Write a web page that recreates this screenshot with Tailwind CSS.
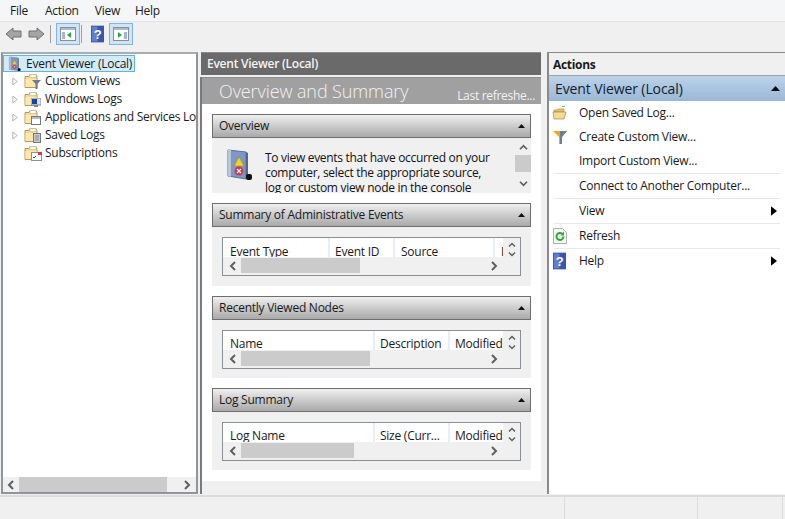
<!DOCTYPE html>
<html lang="en">
<head>
  <meta charset="UTF-8">
  <title>Event Viewer</title>
  <script src="https://cdn.jsdelivr.net/npm/@tailwindcss/browser@4"></script>
</head>
<body class="bg-[#f0f0f0] text-[#1a1a1a] overflow-hidden">
  <!-- shared icons -->
  <svg class="absolute w-0 h-0">
    <defs>
      <symbol id="folder" viewBox="0 0 16 16">
        <path d="M1 3.5h4l1-2h6l1 2v11H1z" fill="#f6dd8e" stroke="#b8995a" stroke-width="1"/>
        <path d="M6 1.5h6v3H6z" fill="#fff" stroke="#c4b58a" stroke-width=".6"/>
        <path d="M1.5 6h11v8h-11z" fill="#fbe9ac"/>
      </symbol>
      <symbol id="left" viewBox="0 0 8 10"><path d="M6 1 2 5l4 4" fill="none" stroke="#5f5f5f" stroke-width="2"/></symbol>
      <symbol id="right" viewBox="0 0 8 10"><path d="M2 1l4 4-4 4" fill="none" stroke="#5f5f5f" stroke-width="2"/></symbol>
      <symbol id="up" viewBox="0 0 10 8"><path d="M1 6l4-4 4 4" fill="none" stroke="#5f5f5f" stroke-width="2"/></symbol>
      <symbol id="down" viewBox="0 0 10 8"><path d="M1 2l4 4 4-4" fill="none" stroke="#5f5f5f" stroke-width="2"/></symbol>
      <symbol id="expand" viewBox="0 0 7 10"><path d="M1 1l5 4-5 4z" fill="#fff" stroke="#a6a6a6"/></symbol>
      <symbol id="help" viewBox="0 0 14 18">
        <rect width="14" height="18" fill="#3a55b0"/><rect x="1" y="1" width="6" height="16" fill="#5f7fd0"/>
        <text x="7" y="14" text-anchor="middle" font-family="Liberation Sans" font-weight="700" font-size="14" fill="#fff">?</text>
      </symbol>
      <symbol id="log" viewBox="0 0 28 34">
        <path d="M3 2l18 2v27L3 28z" fill="#7d98c4" stroke="#5a6f94"/>
        <path d="M3 2l3 0v27l-3-1z" fill="#b9c6da"/>
        <path d="M21 4l2 1v26h-2z" fill="#51688f"/>
        <path d="M14 9l5 9H9z" fill="#f4cf30" stroke="#a8891a" stroke-width=".6"/>
        <circle cx="14" cy="23" r="4.5" fill="#cc3a48"/>
        <path d="M12 21l4 4m0-4l-4 4" stroke="#fff" stroke-width="1.2"/>
        <rect x="21" y="26" width="6" height="6" rx="2" fill="#111"/>
      </symbol>
    </defs>
  </svg>

  <div class="w-[785px] h-[519px] flex flex-col font-['Open_Sans','Liberation_Sans',sans-serif] text-[12px] tracking-[-0.25px]">
    <!-- menu bar -->
    <div class="h-[22px] shrink-0 bg-[#f5f6f7] border-b border-[#e4e4e4] flex items-center text-[12px]">
      <span class="ml-[10px]">File</span>
      <span class="ml-[17px]">Action</span>
      <span class="ml-[16px]">View</span>
      <span class="ml-[15px]">Help</span>
    </div>

    <!-- toolbar -->
    <div class="h-[24px] shrink-0 flex items-center bg-[#f0f0f0] pl-[5px]">
      <svg class="w-[17px] h-[14px]" viewBox="0 0 17 14"><path d="M1 7l7-6v3h8v6H8v3z" fill="#a4a4a4" stroke="#707070"/></svg>
      <svg class="w-[17px] h-[14px] ml-[6px]" viewBox="0 0 17 14"><path d="M16 7L9 1v3H1v6h8v3z" fill="#a4a4a4" stroke="#707070"/></svg>
      <div class="w-px h-[18px] bg-[#a0a0a0] ml-[5px]"></div>
      <div class="w-[24px] h-[22px] ml-[5px] bg-[#cfe4f7] border border-[#7fb5ea] flex items-center justify-center">
        <svg class="w-[16px] h-[14px]" viewBox="0 0 16 14"><rect x=".5" y=".5" width="15" height="13" fill="#fff" stroke="#8a8f95"/><rect x="1" y="1" width="14" height="2" fill="#a8bcd4"/><rect x="2" y="5" width="3" height="7" fill="#9fb7d0"/><path d="M11 5v6L7 8z" fill="#2fa83a"/></svg>
      </div>
      <div class="w-px h-[18px] bg-[#a0a0a0] ml-[1px]"></div>
      <svg class="w-[13px] h-[18px] ml-[9px]"><use href="#help"/></svg>
      <div class="w-[24px] h-[22px] ml-[5px] bg-[#cfe4f7] border border-[#7fb5ea] flex items-center justify-center">
        <svg class="w-[16px] h-[14px]" viewBox="0 0 16 14"><rect x=".5" y=".5" width="15" height="13" fill="#fff" stroke="#8a8f95"/><rect x="1" y="1" width="14" height="2" fill="#a8bcd4"/><rect x="11" y="5" width="3" height="7" fill="#9fb7d0"/><path d="M5 5v6l4-3z" fill="#2fa83a"/></svg>
      </div>
    </div>

    <!-- panes -->
    <div class="flex-1 min-h-0 flex pt-[6px]">
      <!-- tree -->
      <div class="w-[197px] ml-px shrink-0 bg-white border-2 border-[#8f959b] border-t-[#a8adb3] flex flex-col">
        <div class="flex-1 min-h-0 overflow-hidden pt-px whitespace-nowrap">
          <div class="h-[17px] w-[132px] flex items-center bg-[#d3ebf9] border border-[#62b4dd]">
            <svg class="w-[17px] h-[16px] ml-[2px] shrink-0" viewBox="0 0 28 34"><use href="#log"/></svg>
            <span class="ml-[3px]">Event Viewer (Local)</span>
          </div>
          <div class="h-[18px] flex items-center pl-[9px]">
            <svg class="w-[6px] h-[9px] shrink-0"><use href="#expand"/></svg>
            <span class="relative ml-[6px] w-[16px] h-[16px] shrink-0">
              <svg class="w-[16px] h-[16px]"><use href="#folder"/></svg>
              <svg class="absolute right-[-1px] bottom-0 w-[9px] h-[9px]" viewBox="0 0 9 9"><path d="M0 0h9L5.500 4v5h-2V4z" fill="#6f7f8f"/></svg>
            </span>
            <span class="ml-[5px]">Custom Views</span>
          </div>
          <div class="h-[18px] flex items-center pl-[9px]">
            <svg class="w-[6px] h-[9px] shrink-0"><use href="#expand"/></svg>
            <span class="relative ml-[6px] w-[16px] h-[16px] shrink-0">
              <svg class="w-[16px] h-[16px]"><use href="#folder"/></svg>
              <svg class="absolute right-[-1px] bottom-0 w-[10px] h-[9px]" viewBox="0 0 10 9"><rect width="10" height="7" fill="#dfe6ef" stroke="#7d8894"/><rect x="1" y="1" width="5" height="5" fill="#1a3fb0"/><rect x="3" y="7" width="4" height="2" fill="#7d8894"/></svg>
            </span>
            <span class="ml-[5px]">Windows Logs</span>
          </div>
          <div class="h-[18px] flex items-center pl-[9px]">
            <svg class="w-[6px] h-[9px] shrink-0"><use href="#expand"/></svg>
            <span class="relative ml-[6px] w-[16px] h-[16px] shrink-0">
              <svg class="w-[16px] h-[16px]"><use href="#folder"/></svg>
              <svg class="absolute right-[-1px] bottom-0 w-[10px] h-[9px]" viewBox="0 0 10 9"><rect x=".5" y=".5" width="9" height="8" fill="#fff" stroke="#6f7780"/><rect x="1" y="1" width="8" height="2" fill="#b5bfca"/></svg>
            </span>
            <span class="ml-[5px]">Applications and Services Lo</span>
          </div>
          <div class="h-[18px] flex items-center pl-[9px]">
            <svg class="w-[6px] h-[9px] shrink-0"><use href="#expand"/></svg>
            <span class="relative ml-[6px] w-[16px] h-[16px] shrink-0">
              <svg class="w-[16px] h-[16px]"><use href="#folder"/></svg>
              <svg class="absolute right-[-1px] bottom-0 w-[8px] h-[10px]" viewBox="0 0 8 10"><rect x=".5" y=".5" width="7" height="9" fill="#c8ccd2" stroke="#70767e"/><path d="M2 3h4M2 5h4M2 7h4" stroke="#70767e" stroke-width=".7"/></svg>
            </span>
            <span class="ml-[5px]">Saved Logs</span>
          </div>
          <div class="h-[18px] flex items-center pl-[21px]">
            <span class="relative w-[16px] h-[16px] shrink-0">
              <svg class="w-[16px] h-[16px]"><use href="#folder"/></svg>
              <svg class="absolute right-[-2px] bottom-0 w-[11px] h-[9px]" viewBox="0 0 11 9"><rect x=".5" y=".5" width="10" height="8" fill="#fff" stroke="#8a9098"/><rect x="7" y="0" width="4" height="3" fill="#d83a4a"/><path d="M2 5l1 1 2-2" stroke="#3a68c0" fill="none"/></svg>
            </span>
            <span class="ml-[5px]">Subscriptions</span>
          </div>
        </div>
        <div class="h-[15px] shrink-0 bg-[#f0f0f0] flex items-center pl-[4px]">
          <svg class="w-[8px] h-[10px]"><use href="#left"/></svg>
          <div class="h-[15px] w-[148px] ml-[4px] bg-[#cbcbcb]"></div>
          <svg class="w-[8px] h-[10px] ml-[16px]"><use href="#right"/></svg>
        </div>
      </div>

      <!-- centre -->
      <div class="w-[341px] ml-[2px] shrink-0 flex flex-col">
        <div class="h-[23px] shrink-0 ml-px bg-[#6a6a6a] border-t border-[#8c8c8c] flex items-center pl-[6px] font-semibold text-[#f4f4f4]">Event Viewer (Local)</div>
        <div class="flex-1 min-h-0 mt-[2px] border-l-2 border-[#7a7a7a] flex flex-col bg-[#f0f0f0]">
          <div class="h-[27px] shrink-0 bg-[#a0a0a0] border-t border-[#8c8c8c] flex justify-between items-end pl-[17px] pr-[6px] text-[#f2f2f2] whitespace-nowrap">
            <span class="text-[18px] leading-[26px] font-light tracking-[-0.1px]">Overview and Summary</span>
            <span class="leading-[14px] mb-px tracking-[-0.3px]">Last refreshe...</span>
          </div>
          <div class="h-[377px] shrink-0 bg-white pt-[10px] px-[10px] overflow-hidden">
            <!-- Overview -->
            <div class="h-[24px] bg-gradient-to-b from-[#f0f0f0] to-[#a9a9a9] border border-[#6e6e6e] flex items-center justify-between pl-[6px] pr-[5px]">
              <span>Overview</span>
              <svg class="w-[7px] h-[4px]" viewBox="0 0 7 4"><path d="M0 4l3.500-4L7 4z" fill="#111"/></svg>
            </div>
            <div class="h-[55px] bg-[#f0f0f0] flex overflow-hidden">
              <svg class="w-[28px] h-[34px] ml-[13px] mt-[10px] shrink-0"><use href="#log"/></svg>
              <div class="w-[234px] ml-[12px] mt-[12px] leading-[15px] text-[#111] tracking-[-0.3px]">To view events that have occurred on your computer, select the appropriate source, log or custom view node in the console</div>
              <div class="w-[16px] ml-auto flex flex-col items-center">
                <svg class="w-[9px] h-[7px] mt-[6px]"><use href="#up"/></svg>
                <div class="w-full h-[17px] bg-[#cbcbcb] mt-[4px]"></div>
                <svg class="w-[9px] h-[7px] mt-[8px]"><use href="#down"/></svg>
              </div>
            </div>

            <!-- Summary of Administrative Events -->
            <div class="h-[24px] mt-[10px] bg-gradient-to-b from-[#f0f0f0] to-[#a9a9a9] border border-[#6e6e6e] flex items-center justify-between pl-[6px] pr-[5px]">
              <span>Summary of Administrative Events</span>
              <svg class="w-[7px] h-[4px]" viewBox="0 0 7 4"><path d="M0 4l3.500-4L7 4z" fill="#111"/></svg>
            </div>
            <div class="h-[59px] bg-[#f0f0f0] px-[10px] pt-[10px]">
              <div class="h-[39px] border border-[#8a8f95] bg-[#f0f0f0] flex flex-col">
                <div class="h-[19px] flex shrink-0 bg-white overflow-hidden whitespace-nowrap">
                  <div class="w-[107px] pl-[7px] pt-[5px] border-r-2 border-[#e6eff9]">Event Type</div>
                  <div class="w-[65px] pl-[5px] pt-[5px] border-r-2 border-[#e6eff9]">Event ID</div>
                  <div class="w-[100px] pl-[6px] pt-[5px] border-r-2 border-[#e6eff9]">Source</div>
                  <div class="w-[8px] pl-[6px] pt-[5px] overflow-hidden">Log</div>
                  <div class="flex-1 bg-[#f0f0f0] flex flex-col items-center gap-[3px] pt-[4px]">
                    <svg class="w-[8px] h-[6px]"><use href="#up"/></svg>
                    <svg class="w-[8px] h-[6px]"><use href="#down"/></svg>
                  </div>
                </div>
                <div class="h-[17px] flex items-center pl-[6px]">
                  <svg class="w-[8px] h-[10px]"><use href="#left"/></svg>
                  <div class="w-[119px] h-[15px] ml-[4px] bg-[#cbcbcb]"></div>
                  <svg class="w-[8px] h-[10px] ml-[130px]"><use href="#right"/></svg>
                </div>
              </div>
            </div>

            <!-- Recently Viewed Nodes -->
            <div class="h-[24px] mt-[10px] bg-gradient-to-b from-[#f0f0f0] to-[#a9a9a9] border border-[#6e6e6e] flex items-center justify-between pl-[6px] pr-[5px]">
              <span>Recently Viewed Nodes</span>
              <svg class="w-[7px] h-[4px]" viewBox="0 0 7 4"><path d="M0 4l3.500-4L7 4z" fill="#111"/></svg>
            </div>
            <div class="h-[58px] bg-[#f0f0f0] px-[10px] pt-[10px]">
              <div class="h-[39px] border border-[#8a8f95] bg-[#f0f0f0] flex flex-col">
                <div class="h-[19px] flex shrink-0 bg-white overflow-hidden whitespace-nowrap">
                  <div class="w-[152px] pl-[7px] pt-[4px] border-r-2 border-[#e6eff9]">Name</div>
                  <div class="w-[75px] pl-[5px] pt-[4px] border-r-2 border-[#e6eff9]">Description</div>
                  <div class="w-[53px] pl-[5px] pt-[4px] overflow-hidden">Modified</div>
                  <div class="flex-1 bg-[#f0f0f0] flex flex-col items-center gap-[3px] pt-[4px]">
                    <svg class="w-[8px] h-[6px]"><use href="#up"/></svg>
                    <svg class="w-[8px] h-[6px]"><use href="#down"/></svg>
                  </div>
                </div>
                <div class="h-[17px] flex items-center pl-[6px]">
                  <svg class="w-[8px] h-[10px]"><use href="#left"/></svg>
                  <div class="w-[129px] h-[15px] ml-[4px] bg-[#cbcbcb]"></div>
                  <svg class="w-[8px] h-[10px] ml-[120px]"><use href="#right"/></svg>
                </div>
              </div>
            </div>

            <!-- Log Summary -->
            <div class="h-[24px] mt-[10px] bg-gradient-to-b from-[#f0f0f0] to-[#a9a9a9] border border-[#6e6e6e] flex items-center justify-between pl-[6px] pr-[5px]">
              <span>Log Summary</span>
              <svg class="w-[7px] h-[4px]" viewBox="0 0 7 4"><path d="M0 4l3.500-4L7 4z" fill="#111"/></svg>
            </div>
            <div class="h-[58px] bg-[#f0f0f0] px-[10px] pt-[10px]">
              <div class="h-[39px] border border-[#8a8f95] bg-[#f0f0f0] flex flex-col">
                <div class="h-[19px] flex shrink-0 bg-white overflow-hidden whitespace-nowrap">
                  <div class="w-[152px] pl-[7px] pt-[4px] border-r-2 border-[#e6eff9]">Log Name</div>
                  <div class="w-[75px] pl-[5px] pt-[4px] border-r-2 border-[#e6eff9]">Size (Curr...</div>
                  <div class="w-[53px] pl-[5px] pt-[4px] overflow-hidden">Modified</div>
                  <div class="flex-1 bg-[#f0f0f0] flex flex-col items-center gap-[3px] pt-[4px]">
                    <svg class="w-[8px] h-[6px]"><use href="#up"/></svg>
                    <svg class="w-[8px] h-[6px]"><use href="#down"/></svg>
                  </div>
                </div>
                <div class="h-[17px] flex items-center pl-[6px]">
                  <svg class="w-[8px] h-[10px]"><use href="#left"/></svg>
                  <div class="w-[113px] h-[15px] ml-[4px] bg-[#cbcbcb]"></div>
                  <svg class="w-[8px] h-[10px] ml-[136px]"><use href="#right"/></svg>
                </div>
              </div>
            </div>
          </div>
        </div>
      </div>

      <!-- actions -->
      <div class="flex-1 min-w-0 ml-[6px] bg-white border-l-2 border-t border-[#8a8a8a] flex flex-col whitespace-nowrap">
        <div class="h-[23px] shrink-0 bg-[#f0f0f0] border-b border-[#a0a0a0] flex items-center pl-[4px] pt-[2px] font-bold tracking-[-0.3px]">Actions</div>
        <div class="h-[25px] shrink-0 bg-gradient-to-b from-[#bcd3ea] to-[#9ab7d5] flex items-center justify-between pl-[6px] pr-[5px] text-[14px] tracking-[-0.1px] text-[#14202e]">
          <span>Event Viewer (Local)</span>
          <svg class="w-[9px] h-[5px]" viewBox="0 0 9 5"><path d="M0 5l4.500-5L9 5z" fill="#000"/></svg>
        </div>
        <div class="h-[24px] flex items-center pl-[3px]">
          <svg class="w-[16px] h-[14px]" viewBox="0 0 16 14"><path d="M2 4h3l1-1h6v3H2z" fill="#e8c56a" stroke="#a8894a" stroke-width=".7"/><path d="M1 6h13l-2 7H2z" fill="#f4dc92" stroke="#a8894a" stroke-width=".7"/><path d="M10 .5h3" stroke="#5cc85c"/></svg>
          <span class="ml-[11px]">Open Saved Log...</span>
        </div>
        <div class="h-[24px] flex items-center pl-[3px]">
          <svg class="w-[16px] h-[14px]" viewBox="0 0 16 14"><path d="M1 1h14L10 7v7H7V7z" fill="#f0a820"/><path d="M8 1h7l-5 6v7H8z" fill="#6f7f8f"/></svg>
          <span class="ml-[11px]">Create Custom View...</span>
        </div>
        <div class="h-[24px] flex items-center pl-[30px]">Import Custom View...</div>
        <div class="h-px mx-[5px] shrink-0 bg-[#e8e8e8]"></div>
        <div class="h-[24px] flex items-center pl-[30px]">Connect to Another Computer...</div>
        <div class="h-px mx-[5px] shrink-0 bg-[#e8e8e8]"></div>
        <div class="h-[24px] flex items-center justify-between pl-[30px] pr-[8px]">
          <span>View</span>
          <svg class="w-[6px] h-[10px]" viewBox="0 0 5 8"><path d="M0 0l5 4-5 4z" fill="#000"/></svg>
        </div>
        <div class="h-px mx-[5px] shrink-0 bg-[#e8e8e8]"></div>
        <div class="h-[24px] flex items-center pl-[4px]">
          <svg class="w-[14px] h-[16px]" viewBox="0 0 14 16"><path d="M.5.5h9l4 4v11H.5z" fill="#f4f4f4" stroke="#b0b0b0"/><path d="M10.500 8.500a3.500 3.500 0 1 1-1.200-2.700" fill="none" stroke="#2faa3a" stroke-width="2"/><path d="M11 3.500v4H7.500z" fill="#2faa3a"/></svg>
          <span class="ml-[12px]">Refresh</span>
        </div>
        <div class="h-px mx-[5px] shrink-0 bg-[#e8e8e8]"></div>
        <div class="h-[24px] flex items-center justify-between pl-[4px] pr-[8px]">
          <span class="flex items-center">
            <svg class="w-[13px] h-[18px]"><use href="#help"/></svg>
            <span class="ml-[13px]">Help</span>
          </span>
          <svg class="w-[6px] h-[10px]" viewBox="0 0 5 8"><path d="M0 0l5 4-5 4z" fill="#000"/></svg>
        </div>
      </div>
    </div>

    <!-- status bar -->
    <div class="h-[24px] shrink-0 mt-px bg-[#f0f0f0] border-t-2 border-[#dcdcdc] flex justify-end">
      <div class="w-[133px] border-l border-[#dcdcdc]"></div>
      <div class="w-[85px] border-l border-[#dcdcdc]"></div>
      <div class="w-[3px] border-l border-[#dcdcdc]"></div>
    </div>
  </div>
</body>
</html>
